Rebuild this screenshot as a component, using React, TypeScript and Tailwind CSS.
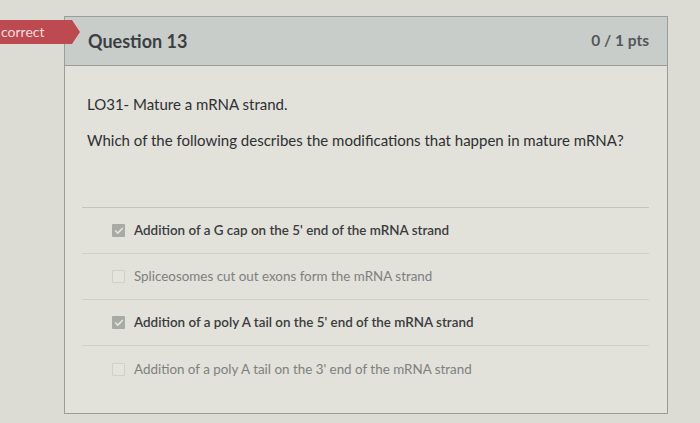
import { Check } from 'lucide-react'

const answers = [
  { text: "Addition of a G cap on the 5' end of the mRNA strand", picked: true },
  { text: 'Spliceosomes cut out exons form the mRNA strand', picked: false },
  { text: "Addition of a poly A tail on the 5' end of the mRNA strand", picked: true },
  { text: "Addition of a poly A tail on the 3' end of the mRNA strand", picked: false },
]

export default function App() {
  return (
    <div
      className="relative w-[700px] h-[423px] bg-[#dcdbd4] pt-[16px] pl-[64px] pr-[32px] overflow-hidden"
      style={{ fontFamily: 'Lato, "Open Sans", sans-serif' }}
    >
      {/* Result tab */}
      <div className="absolute left-0 top-[20px] flex items-center h-[24px]">
        <div className="h-full w-[72px] bg-[#bd4a50] text-[#f3dede] text-[14px] leading-[24px] pl-[1px]">
          correct
        </div>
        <div className="w-0 h-0 border-y-[12px] border-y-transparent border-l-[8px] border-l-[#bd4a50]" />
      </div>

      <div className="h-[398px] border border-[#9a9d99] bg-[#e2e1da] flex flex-col">
        {/* Header */}
        <div className="h-[49px] bg-[#c8cdca] border-b border-[#9a9d99] flex items-center justify-between pl-[23px] pr-[18px]">
          <h2 className="text-[18px] font-bold text-[#3c3f42]">Question 13</h2>
          <span className="text-[15.5px] font-bold text-[#55585a]">0 / 1 pts</span>
        </div>

        {/* Body */}
        <div className="pt-[28px] pl-[22px] pr-[18px]">
          <p className="text-[15px] leading-[20px] text-[#2e3033]">LO31- Mature a mRNA strand.</p>
          <p className="mt-[16px] text-[15px] leading-[20px] text-[#2e3033]">
            Which of the following describes the modifications that happen in mature mRNA?
          </p>

          <div className="mt-[57px] ml-[-5px] border-t border-[#c3c4bd]">
            {answers.map((a, i) => (
              <div
                key={i}
                className="h-[46px] flex items-center gap-[9px] pl-[30px] border-b border-[#d0d0c9] last:border-b-0"
              >
                {a.picked ? (
                  <span className="w-[13px] h-[13px] bg-[#a8aaa5] flex items-center justify-center rounded-[1px]">
                    <Check className="w-[10px] h-[10px] text-[#e4e5e0]" strokeWidth={4} />
                  </span>
                ) : (
                  <span className="w-[13px] h-[13px] border border-[#cfd0ca] bg-[#e4e3dc] rounded-[1px]" />
                )}
                <span
                  className={
                    a.picked
                      ? 'text-[13.4px] font-semibold text-[#3a3c3e]'
                      : 'text-[13.4px] text-[#7e807f]'
                  }
                >
                  {a.text}
                </span>
              </div>
            ))}
          </div>
        </div>
      </div>
    </div>
  )
}
